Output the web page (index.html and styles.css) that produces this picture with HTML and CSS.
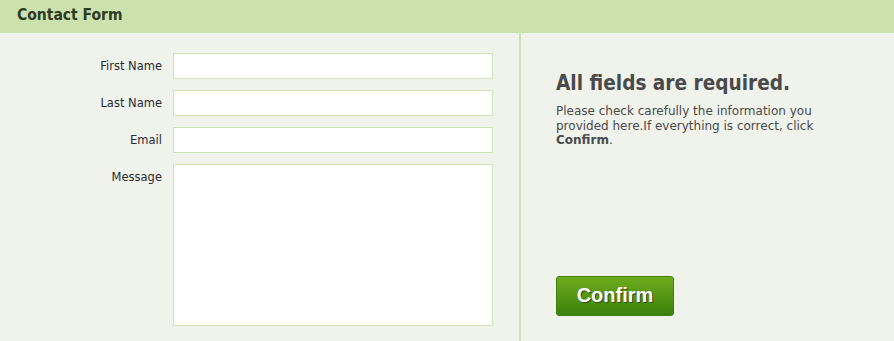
FILE: index.html
```html
<!DOCTYPE html>
<html>
<head>
<meta charset="utf-8">
<link rel="stylesheet" href="styles.css">
</head>
<body>
<div class="header">Contact Form</div>
<div class="main">
  <div class="form">
    <div class="row"><label class="lbl">First Name</label><input class="field" type="text"></div>
    <div class="row"><label class="lbl">Last Name</label><input class="field" type="text"></div>
    <div class="row"><label class="lbl">Email</label><input class="field" type="text"></div>
    <div class="row"><label class="lbl msg">Message</label><textarea class="area"></textarea></div>
  </div>
  <div class="side">
    <h2 class="title">All fields are required.</h2>
    <p class="note">Please check carefully the information you provided here.If everything is correct, click <b>Confirm</b>.</p>
    <button class="btn">Confirm</button>
  </div>
</div>
</body>
</html>
```
FILE: styles.css
```css
html, body { margin: 0; padding: 0; }
body {
  background: #f0f2ec;
  font-family: "DejaVu Sans", sans-serif;
  color: #333;
  width: 894px;
  height: 341px;
  overflow: hidden;
}
.header {
  background: #cce2ae;
  height: 33px;
  box-sizing: border-box;
  padding: 6px 0 0 17px;
  font-family: "DejaVu Sans Condensed", "DejaVu Sans", sans-serif;
  font-stretch: condensed;
  font-size: 15.5px;
  font-weight: bold;
  color: #2e3a22;
}
.main {
  display: flex;
  height: 308px;
}
.form {
  width: 519px;
  border-right: 2px solid #cce2ae;
  box-sizing: content-box;
  padding-top: 20px;
}
.row {
  display: flex;
  align-items: flex-start;
  margin-bottom: 11px;
}
.lbl {
  width: 162px;
  text-align: right;
  font-size: 11.5px;
  color: #2a2a33;
  padding-top: 6px;
  margin-right: 11px;
}
.field {
  width: 320px;
  height: 26px;
  box-sizing: border-box;
  border: 1px solid #cfe3b5;
  background: #fff;
  margin: 0;
  outline: none;
}
.area {
  width: 320px;
  height: 162px;
  box-sizing: border-box;
  border: 1px solid #cfe3b5;
  background: #fff;
  margin: 0;
  resize: none;
}
.side {
  padding: 38px 0 0 35px;
  display: flex;
  flex-direction: column;
  align-items: flex-start;
}
.title {
  margin: 0;
  font-family: "DejaVu Sans Condensed", "DejaVu Sans", sans-serif;
  font-stretch: condensed;
  font-size: 20.6px;
  font-weight: bold;
  color: #4a4a4a;
}
.note {
  margin: 9px 0 0;
  width: 280px;
  font-size: 12px;
  line-height: 14.5px;
  color: #4a4a4a;
}
.btn {
  margin-top: 128px;
  width: 118px;
  height: 40px;
  border: 1px solid #3f7f12;
  border-radius: 3px;
  background: linear-gradient(#6eac1c, #3c800b);
  color: #fff;
  font-family: "Liberation Sans", Arial, sans-serif;
  font-weight: bold;
  font-size: 20px;
  text-shadow: 1px 1px 1px #2a4a10;
  padding: 0;
}
```
